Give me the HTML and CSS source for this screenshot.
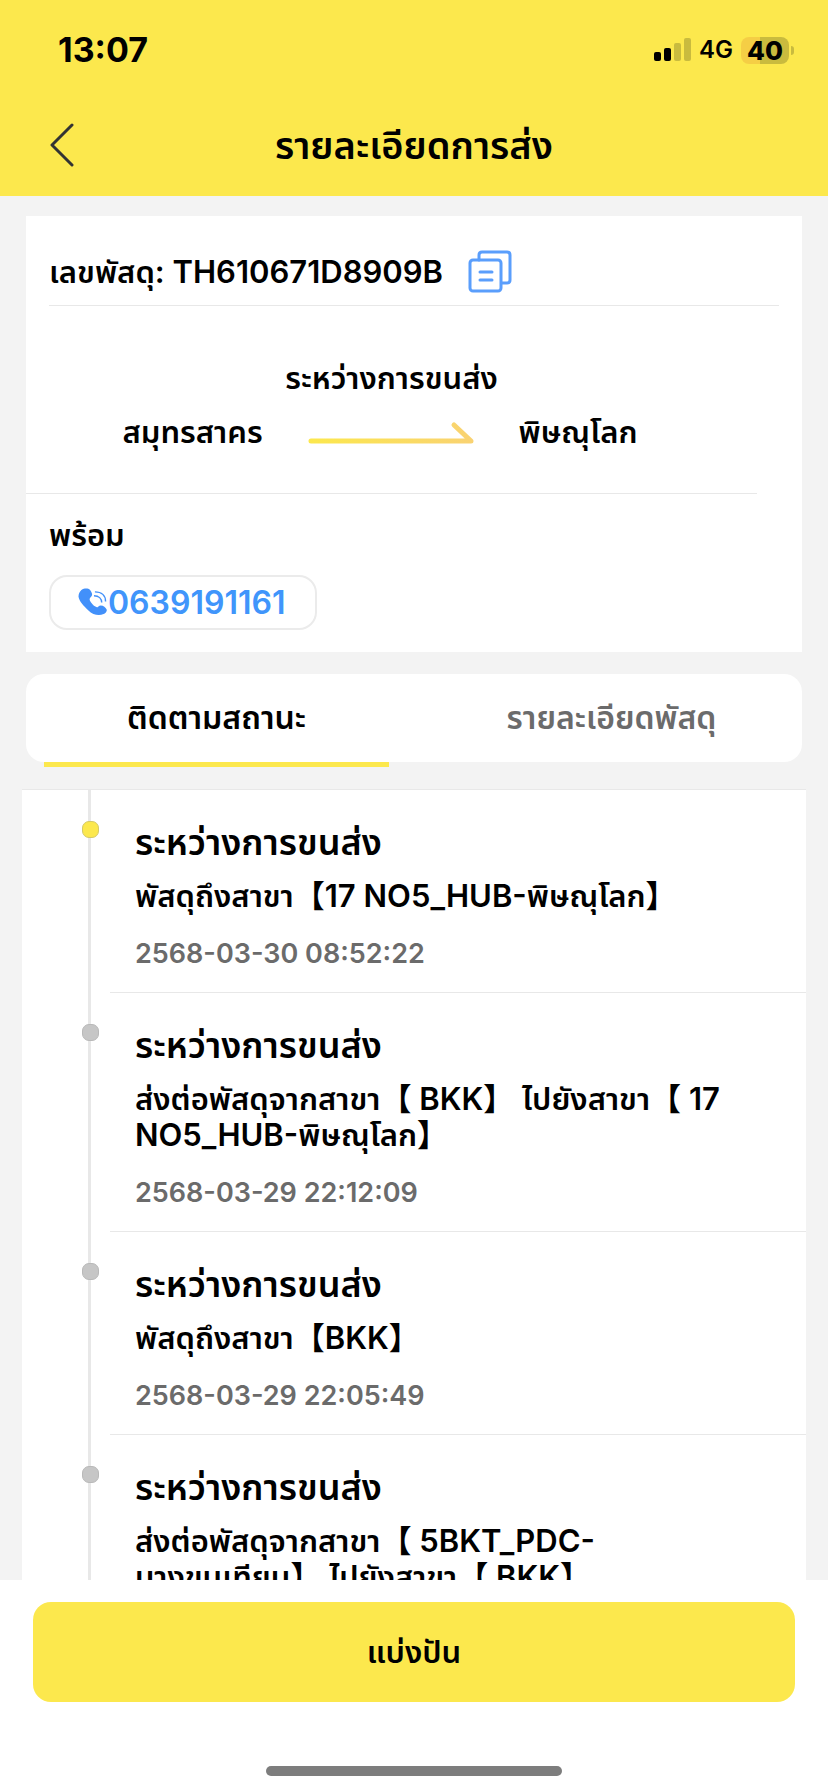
FILE: index.html
```html
<!DOCTYPE html>
<html lang="th">
<head>
<meta charset="utf-8">
<meta name="viewport" content="width=device-width, initial-scale=1">
<title>รายละเอียดการส่ง</title>
<link rel="stylesheet" href="styles.css">
</head>
<body>
<div class="app">
  <header class="header">
    <div class="status-bar">
      <span class="clock">13:07</span>
      <div class="status-icons">
        <svg class="signal" viewBox="0 0 37 24" aria-hidden="true">
          <rect x="0" y="14" width="7" height="9" rx="2"/>
          <rect x="10" y="10" width="7" height="13" rx="2"/>
          <rect class="dim" x="20" y="5" width="7" height="18" rx="2"/>
          <rect class="dim" x="30" y="0" width="7" height="23" rx="2"/>
        </svg>
        <span class="network">4G</span>
        <span class="battery"><span class="battery-level">40</span></span>
      </div>
    </div>
    <div class="title-bar">
      <button class="back" type="button" aria-label="ย้อนกลับ">
        <svg viewBox="0 0 24 44" aria-hidden="true"><path d="M22 2 2 22l20 20"/></svg>
      </button>
      <h1 class="title">รายละเอียดการส่ง</h1>
    </div>
  </header>

  <main class="content">
    <section class="card">
      <div class="parcel">
        <span class="parcel-no">เลขพัสดุ: TH610671D8909B</span>
        <button class="copy" type="button" aria-label="คัดลอก">
          <svg viewBox="0 0 44 44" aria-hidden="true">
            <path d="M11 10V5q0-3 3-3h25q3 0 3 3v25q0 3-3 3h-5"/>
            <rect x="2" y="10" width="31" height="31" rx="3"/>
            <path d="M12 22h12M12 30h12"/>
          </svg>
        </button>
      </div>
      <div class="route">
        <p class="route-status">ระหว่างการขนส่ง</p>
        <div class="route-line">
          <span class="place">สมุทรสาคร</span>
          <svg class="arrow" viewBox="0 0 166 24" aria-hidden="true">
            <defs>
              <linearGradient id="fade" gradientUnits="userSpaceOnUse" x1="0" y1="0" x2="166" y2="0">
                <stop offset="0" stop-color="#fce84d"/>
                <stop offset="1" stop-color="#f9d272"/>
              </linearGradient>
            </defs>
            <path d="M3 21h160L146 5" stroke="url(#fade)"/>
          </svg>
          <span class="place">พิษณุโลก</span>
        </div>
      </div>
      <div class="contact">
        <span class="contact-name">พร้อม</span>
        <a class="phone" href="tel:0639191161">
          <svg viewBox="0 0 30 30" aria-hidden="true">
            <path class="handset" d="M3 2C6 0 10 0 12 2c2 3 3 5 1 7-2 2-2 3 0 6 2 3 4 4 6 5 1 0 2-2 4-2 3 0 5 2 6 4 1 2-1 4-3 5-5 2-11 1-16-4C5 18 1 14 0 9 0 6 1 4 3 2z"/>
            <path class="wave" d="M17 4c7 0 11 4 11 10M16 8c5 0 8 3 8 7"/>
          </svg>
          <span>0639191161</span>
        </a>
      </div>
    </section>

    <nav class="tabs">
      <button class="tab active" type="button">ติดตามสถานะ</button>
      <button class="tab" type="button">รายละเอียดพัสดุ</button>
    </nav>

    <ol class="timeline">
      <li class="event current">
        <span class="rail"></span>
        <div class="event-body">
          <h2 class="event-title">ระหว่างการขนส่ง</h2>
          <p class="event-text">พัสดุถึงสาขา【17 NO5_HUB-พิษณุโลก】</p>
          <time class="event-time">2568-03-30 08:52:22</time>
        </div>
      </li>
      <li class="event">
        <span class="rail"></span>
        <div class="event-body">
          <h2 class="event-title">ระหว่างการขนส่ง</h2>
          <p class="event-text">ส่งต่อพัสดุจากสาขา【 BKK】 ไปยังสาขา【 17<br>NO5_HUB-พิษณุโลก】</p>
          <time class="event-time">2568-03-29 22:12:09</time>
        </div>
      </li>
      <li class="event">
        <span class="rail"></span>
        <div class="event-body">
          <h2 class="event-title">ระหว่างการขนส่ง</h2>
          <p class="event-text">พัสดุถึงสาขา【BKK】</p>
          <time class="event-time">2568-03-29 22:05:49</time>
        </div>
      </li>
      <li class="event">
        <span class="rail"></span>
        <div class="event-body">
          <h2 class="event-title">ระหว่างการขนส่ง</h2>
          <p class="event-text">ส่งต่อพัสดุจากสาขา【 5BKT_PDC-<br>บางขุนเทียน】 ไปยังสาขา【 BKK】</p>
        </div>
      </li>
    </ol>
  </main>

  <footer class="footer">
    <button class="share" type="button">แบ่งปัน</button>
    <span class="home-indicator"></span>
  </footer>
</div>
</body>
</html>
```
FILE: styles.css
```css
* { box-sizing: border-box; }
body {
  margin: 0;
  background: #f3f3f3;
  color: #000;
  font-family: Inter, "Noto Sans Thai", "Noto Sans CJK SC", sans-serif;
  font-size: 31px;
  font-weight: 600;
  line-height: 36px;
}
h1, h2, p, ol { margin: 0; padding: 0; font-weight: inherit; }
button { border: 0; padding: 0; background: none; color: inherit; font: inherit; }
svg { display: block; fill: none; }

.app { display: flex; flex-direction: column; height: 100vh; }

.header { flex: none; background: #fce84d; }
.status-bar {
  display: flex;
  justify-content: space-between;
  align-items: center;
  height: 100px;
  padding: 0 34px 0 58px;
}
.clock { font-size: 34px; font-weight: 700; }
.status-icons { display: flex; align-items: center; gap: 8px; }
.signal { width: 37px; height: 24px; fill: #000; }
.signal .dim { fill: #c9bb3e; }
.network { font-size: 24px; }
.battery { display: flex; align-items: center; gap: 2px; }
.battery-level {
  width: 48px;
  height: 27px;
  border-radius: 8px;
  background: linear-gradient(90deg, #f5ce45 40%, #c9bb3e 40%);
  font-size: 26px;
  font-weight: 800;
  line-height: 27px;
  text-align: center;
}
.battery::after {
  content: "";
  width: 3px;
  height: 9px;
  border-radius: 0 4px 4px 0;
  background: #c9bb3e;
}
.title-bar {
  display: grid;
  grid-template-columns: 80px 1fr 80px;
  align-items: center;
  height: 96px;
  padding-bottom: 7px;
}
.back { justify-self: end; width: 30px; height: 44px; }
.back svg { width: 24px; height: 44px; stroke: #333; stroke-width: 3; stroke-linecap: round; stroke-linejoin: round; }
.title { font-size: 38px; line-height: 44px; text-align: center; }

.content { flex: 1; min-height: 0; overflow: hidden; padding-top: 20px; }
.card { margin: 0 26px; background: #fff; }
.parcel {
  display: flex;
  align-items: center;
  gap: 25px;
  height: 90px;
  margin: 0 23px;
  padding-top: 22px;
  border-bottom: 1px solid #e8e8e8;
}
.copy svg { width: 44px; height: 44px; stroke: #5a9efc; stroke-width: 3; stroke-linecap: round; }
.route {
  height: 188px;
  margin-right: 45px;
  padding-top: 52px;
  border-bottom: 1px solid #e8e8e8;
  text-align: center;
}
.route-status { line-height: 40px; }
.route-line {
  display: flex;
  justify-content: center;
  align-items: center;
  gap: 45px;
  margin-right: 23px;
  padding-top: 14px;
  line-height: 40px;
}
.arrow { width: 166px; height: 24px; stroke-width: 5; stroke-linecap: round; stroke-linejoin: round; }
.contact {
  display: flex;
  flex-direction: column;
  align-items: flex-start;
  gap: 22px;
  padding: 23px 23px 22px;
}
.phone {
  display: flex;
  align-items: center;
  height: 55px;
  padding: 0 30px 0 27px;
  border: 2px solid #ebebeb;
  border-radius: 18px;
  color: #4095fb;
  font-size: 32px;
  text-decoration: none;
}
.phone svg { width: 30px; height: 29px; }
.handset { fill: #4290fa; }
.wave { stroke: #4290fa; stroke-width: 1.5; }

.tabs {
  display: grid;
  grid-template-columns: 1fr 1fr;
  gap: 50px;
  height: 88px;
  margin: 22px 26px 27px;
  padding: 0 18px;
  border-radius: 18px;
  background: #fff;
}
.tab { position: relative; color: #6b6b6b; font-size: 32px; }
.tab.active { color: #000; }
.tab.active::after {
  content: "";
  position: absolute;
  inset: 100% 0 auto;
  height: 5px;
  background: #fce84d;
}

.timeline { margin: 0 22px; border-top: 1px solid #e8e8e8; background: #fff; list-style: none; }
.event { display: grid; grid-template-columns: 88px 1fr; }
.rail { position: relative; width: 3px; margin-left: 66px; background: #e8e8e8; }
.rail::after {
  content: "";
  position: absolute;
  top: 31px;
  left: -6px;
  width: 15px;
  height: 15px;
  border: 1px solid #b9b9b9;
  border-radius: 7px;
  background: #c6c6c6;
}
.current .rail::after { border-color: #d5ca68; background: #fce84d; }
.event-body { padding: 30px 25px 20px; border-bottom: 1px solid #e8e8e8; }
.event-title { font-size: 36px; line-height: 44px; }
.event-text { padding-top: 14px; line-height: 36px; }
.event-time { display: block; padding-top: 22px; color: #6b6b6b; font-size: 27px; line-height: 36px; }

.footer {
  display: flex;
  flex-direction: column;
  align-items: center;
  gap: 64px;
  flex: none;
  padding: 22px 33px 16px;
  background: #fff;
}
.share { width: 100%; height: 100px; border-radius: 18px; background: #fce84d; }
.home-indicator { width: 296px; height: 10px; border-radius: 5px; background: #7d7d7d; }
```
